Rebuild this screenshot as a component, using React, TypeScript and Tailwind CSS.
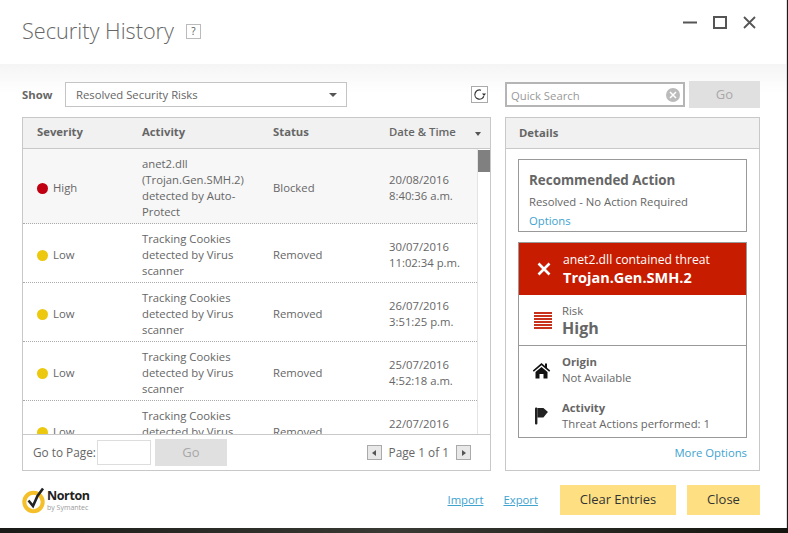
import React from 'react';

const rows = [
  { level: 'High', activity: ['anet2.dll', '(Trojan.Gen.SMH.2)', 'detected by Auto-', 'Protect'], status: 'Blocked', date: '20/08/2016', time: '8:40:36 a.m.' },
  { level: 'Low', activity: ['Tracking Cookies', 'detected by Virus', 'scanner'], status: 'Removed', date: '30/07/2016', time: '11:02:34 p.m.' },
  { level: 'Low', activity: ['Tracking Cookies', 'detected by Virus', 'scanner'], status: 'Removed', date: '26/07/2016', time: '3:51:25 p.m.' },
  { level: 'Low', activity: ['Tracking Cookies', 'detected by Virus', 'scanner'], status: 'Removed', date: '25/07/2016', time: '4:52:18 a.m.' },
  { level: 'Low', activity: ['Tracking Cookies', 'detected by Virus', 'scanner'], status: 'Removed', date: '22/07/2016', time: '\u00a0' },
];

const WindowControls = () => (
  <div className="flex items-center gap-[15px] mt-[15px] mr-[28px]">
    <svg width="15" height="15" viewBox="0 0 15 15"><path d="M0 7.500h14" stroke="#555" strokeWidth="2" /></svg>
    <svg width="15" height="15" viewBox="0 0 15 15"><rect x="1" y="2" width="12" height="11" fill="none" stroke="#555" strokeWidth="2" /></svg>
    <svg width="15" height="15" viewBox="0 0 15 15"><path d="M1 2l11 11M12 2L1 13" stroke="#555" strokeWidth="1.800" /></svg>
  </div>
);

const NortonLogo = () => (
  <div className="flex items-center">
    <svg width="25" height="28" viewBox="0 0 25 28">
      <circle cx="11.500" cy="16" r="9.200" fill="#fff" stroke="#f5bf2a" strokeWidth="4" />
      <path d="M6.500 14.500l4.500 5.500 4.500-10 5.500-7.500" fill="none" stroke="#222" strokeWidth="2.600" />
    </svg>
    <div className="mt-[2px] flex flex-col">
      <span className="text-[12.500px] leading-[14px] font-bold tracking-[-0.4px] text-[#222]">Norton</span>
      <span className="text-[7px] leading-[10px] text-[#9a9a9a]">by Symantec</span>
    </div>
  </div>
);

const App = () => {
  return (
    <div className="h-[533px] w-[788px] overflow-hidden flex flex-col bg-[#1c1c1a] text-[11.300px] text-[#666] font-['Open_Sans',sans-serif]">
      <div className="h-[528px] w-[787px] bg-white flex flex-col border-r border-[#ddd]">
        <div className="h-[64px] flex justify-between items-start shrink-0">
          <div className="flex items-center pl-[22px] pt-[16px]">
            <h1 className="text-[21.700px] leading-[30px] font-light text-[#666]">Security History</h1>
            <span className="ml-[12px] w-[15px] h-[15px] border border-[#bbb] flex items-center justify-center text-[10px] text-[#555]">?</span>
          </div>
          <WindowControls />
        </div>

        <div className="flex-1 flex flex-col pl-[22px] pr-[26px] bg-gradient-to-b from-[#f5f5f5] to-white to-[30px] bg-no-repeat">
          <div className="flex items-center h-[53px] shrink-0 pt-[8px]">
            <span className="w-[43px] font-bold text-[#666] mt-[1px]">Show</span>
            <div className="w-[282px] h-[25px] bg-white border border-[#c4c4c4] flex items-center justify-between pl-[10px] pr-[9px] text-[#666]">
              <span className="mt-[1px]">Resolved Security Risks</span>
              <span className="w-0 h-0 border-x-[4px] border-x-transparent border-t-[4px] border-t-[#555]" />
            </div>
            <div className="ml-[124px] w-[17px] h-[17px] bg-white border border-[#aaa] flex items-center justify-center">
              <svg width="13" height="13" viewBox="0 0 13 13"><path d="M8 2.200A4.600 4.600 0 1 0 10.800 8.200" fill="none" stroke="#333" strokeWidth="1.200" /><path d="M9 5.500h4l-2 2.500z" fill="#333" /></svg>
            </div>
            <div className="ml-[17px] w-[180px] h-[25px] bg-white border-2 border-[#b5b5b5] flex items-center justify-between pl-[4px] pr-[3px] text-[#999]">
              <span className="mt-[4px]">Quick Search</span>
              <span className="w-[14px] h-[14px] rounded-full bg-[#bbb] flex items-center justify-center">
                <svg width="8" height="8" viewBox="0 0 8 8"><path d="M1 1l6 6M7 1L1 7" stroke="#fff" strokeWidth="1.500" /></svg>
              </span>
            </div>
            <button className="ml-[4px] w-[71px] h-[27px] bg-[#e0e0e0] text-[#a8a8a8] text-[13px]">Go</button>
          </div>

          <div className="flex gap-[14px] h-[354px] shrink-0">
            <div className="w-[469px] border border-[#c8c8c8] flex flex-col bg-white">
              <div className="h-[31px] shrink-0 bg-[#f1f1f1] border-b border-[#c8c8c8] grid grid-cols-[105px_131px_116px_1fr] items-center font-bold text-[#666] pl-[14px]">
                <span className="mb-[2px]">Severity</span>
                <span className="mb-[2px]">Activity</span>
                <span className="mb-[2px]">Status</span>
                <div className="flex items-center mb-[2px]">
                  <span className="font-semibold">Date &amp; Time</span>
                  <span className="ml-[19px] mt-[3px] w-0 h-0 border-x-[3.500px] border-x-transparent border-t-[4px] border-t-[#555]" />
                </div>
              </div>
              <div className="flex-1 min-h-0 flex overflow-hidden">
                <div className="w-[454px] overflow-hidden">
                  {rows.map((r, i) => (
                    <div key={i} className={`grid grid-cols-[105px_131px_116px_1fr] items-center pl-[14px] pt-[7px] pb-[3px] leading-[16px] border-b border-dotted border-[#aaa] ${i === 0 ? 'bg-[#f7f7f7]' : 'bg-white'}`}>
                      <div className="flex items-center gap-[5px]">
                        <span className={`w-[11px] h-[11px] rounded-full ${r.level === 'High' ? 'bg-[#c00012]' : 'bg-[#ecc90e]'}`} />
                        <span>{r.level}</span>
                      </div>
                      <div>
                        {r.activity.map((a) => (
                          <div key={a}>{a}</div>
                        ))}
                      </div>
                      <span>{r.status}</span>
                      <div>
                        <div>{r.date}</div>
                        <div>{r.time}</div>
                      </div>
                    </div>
                  ))}
                </div>
                <div className="flex-1 border-l border-[#e4e4e4] pt-[1px]">
                  <div className="h-[22px] bg-[#808080]" />
                </div>
              </div>
              <div className="h-[36px] shrink-0 border-t border-[#c8c8c8] flex items-center pl-[10px] pr-[19px] bg-white">
                <span className="w-[64px] text-[11.800px] whitespace-nowrap">Go to Page:</span>
                <div className="w-[54px] h-[25px] border border-[#ddd] bg-white" />
                <button className="ml-[4px] w-[72px] h-[27px] bg-[#e0e0e0] text-[#a8a8a8] text-[13px]">Go</button>
                <div className="ml-auto flex items-center gap-[7px]">
                  <span className="w-[15px] h-[15px] border border-[#aaa] bg-[#e8e8e8] flex items-center justify-center">
                    <span className="w-0 h-0 border-y-[3px] border-y-transparent border-r-[4px] border-r-[#555]" />
                  </span>
                  <span className="text-[11.800px]">Page 1 of 1</span>
                  <span className="w-[15px] h-[15px] border border-[#aaa] bg-[#e8e8e8] flex items-center justify-center">
                    <span className="w-0 h-0 border-y-[3px] border-y-transparent border-l-[4px] border-l-[#555]" />
                  </span>
                </div>
              </div>
            </div>

            <div className="w-[255px] border border-[#c8c8c8] flex flex-col bg-white">
              <div className="h-[31px] shrink-0 bg-[#f1f1f1] border-b border-[#c8c8c8] flex items-center pl-[13px] font-bold">Details</div>
              <div className="px-[12px] pt-[10px] flex-1 flex flex-col">
                <div className="h-[73px] border border-[#999] pl-[10px] pt-[12px] leading-[16px]">
                  <div className="font-bold text-[13.400px] leading-[17px] mb-[5px]">Recommended Action</div>
                  <div>Resolved - No Action Required</div>
                  <div className="text-[#3ea3cf] mt-[3px]">Options</div>
                </div>
                <div className="mt-[10px] border border-[#999] h-[196px] flex flex-col">
                  <div className="h-[52px] shrink-0 bg-[#c81c00] flex items-center text-white">
                    <svg className="ml-[18px] shrink-0" width="14" height="14" viewBox="0 0 14 14"><path d="M1.500 1.500l11 11M12.500 1.500l-11 11" stroke="#fff" strokeWidth="2.600" /></svg>
                    <div className="ml-[12px]">
                      <div className="text-[12.200px] leading-[17px]">anet2.dll contained threat</div>
                      <div className="text-[14.500px] leading-[19px] font-bold">Trojan.Gen.SMH.2</div>
                    </div>
                  </div>
                  <div className="h-[51px] shrink-0 border-b border-[#999] flex items-center">
                    <div className="ml-[15px] w-[18px] flex flex-col gap-[1px] shrink-0">
                      {[0, 1, 2, 3, 4, 5].map((b) => (
                        <div key={b} className="h-[2px] bg-[#c8321c]" />
                      ))}
                    </div>
                    <div className="ml-[10px]">
                      <div className="leading-[15px]">Risk</div>
                      <div className="text-[16px] leading-[20px] font-bold">High</div>
                    </div>
                  </div>
                  <div className="pt-[8px] flex flex-col gap-[14px]">
                    <div className="flex items-center">
                      <div className="w-[43px] shrink-0 pl-[13px]">
                        <svg width="19" height="17" viewBox="0 0 19 17">
                          <path d="M9.500 1L0.800 8.600l1 1.200 7.700-6.600 7.700 6.600 1-1.200-3.200-2.800V1.500h-2v2.500z" fill="#111" />
                          <path d="M3.500 10l6-5 6 5v6.500h-4v-4.500h-4v4.500h-4z" fill="#111" />
                        </svg>
                      </div>
                      <div className="leading-[16px]">
                        <div className="font-bold">Origin</div>
                        <div>Not Available</div>
                      </div>
                    </div>
                    <div className="flex items-center">
                      <div className="w-[43px] shrink-0 pl-[15px]">
                        <svg width="15" height="18" viewBox="0 0 15 18">
                          <rect x="1" y="0.500" width="2.400" height="17" rx="1" fill="#222" />
                          <path d="M3.400 1h6l4.600 4-1 1-3.600 4.500H3.400z" fill="#222" />
                        </svg>
                      </div>
                      <div className="leading-[16px]">
                        <div className="font-bold">Activity</div>
                        <div>Threat Actions performed: 1</div>
                      </div>
                    </div>
                  </div>
                </div>
                <div className="text-right text-[#3ea3cf] mt-[7px] leading-[16px]">More Options</div>
              </div>
            </div>
          </div>

          <div className="flex-1 flex items-start pt-[14px]">
            <div className="mt-[1px]"><NortonLogo /></div>
            <div className="ml-auto flex items-center">
              <a className="text-[#3ea3cf] underline">Import</a>
              <a className="ml-[20px] text-[#3ea3cf] underline">Export</a>
              <button className="ml-[22px] w-[116px] h-[30px] bg-[#fee083] text-[#333] text-[13px]">Clear Entries</button>
              <button className="ml-[11px] w-[73px] h-[30px] bg-[#fee083] text-[#333] text-[13px]">Close</button>
            </div>
          </div>
        </div>
      </div>
      <div className="h-[5px] bg-gradient-to-r from-[#1a1a18] via-[#3a3a34] to-[#15150f]" />
    </div>
  );
};

export default App;
